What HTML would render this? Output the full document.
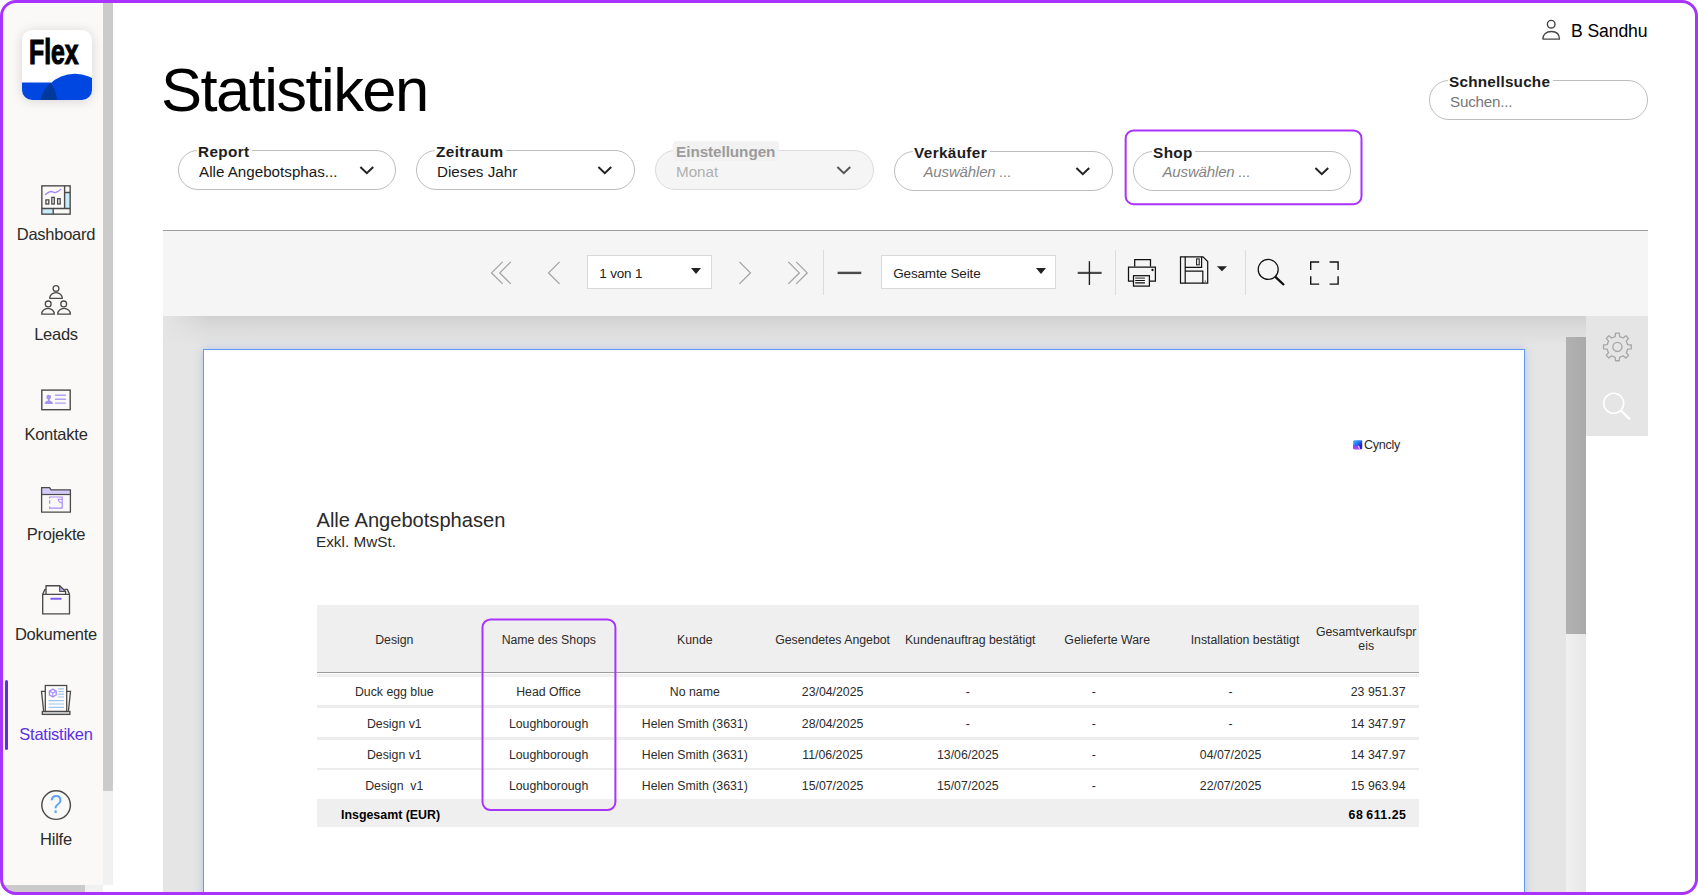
<!DOCTYPE html>
<html lang="de">
<head>
<meta charset="utf-8">
<title>Statistiken</title>
<style>
*{box-sizing:border-box;margin:0;padding:0}
html,body{width:1698px;height:895px;overflow:hidden;background:#fff}
body{font-family:"Liberation Sans",sans-serif;color:#111;position:relative}
.abs{position:absolute}
#frame{position:absolute;left:0;top:0;width:1698px;height:895px;border:3px solid #a932fd;border-radius:16px;box-shadow:0 0 0 24px #fff;z-index:50;pointer-events:none}
/* sidebar */
#side{position:absolute;left:0;top:0;width:103px;height:885px;background:#faf9f7}
#vsb{position:absolute;left:103px;top:0;width:10px;height:885px;background:#f1f1f1}
#vsb i{position:absolute;left:0;top:0;width:10px;height:791px;background:#cbcbcb}
#hsb{position:absolute;left:0;top:885px;width:103px;height:10px;background:#f1f1f1}
#hsb i{position:absolute;left:0;top:0;width:85px;height:10px;background:#cbcbcb}
.nav{position:absolute;left:0;width:112px;text-align:center;font-size:16.5px;line-height:20px;color:#2b2b2b;letter-spacing:-0.25px;white-space:nowrap}
.nav.on{color:#5a30e4}
.ico{position:absolute}
/* header */
#title{position:absolute;left:161px;top:54.5px;font-size:61.5px;line-height:70px;letter-spacing:-1.55px;color:#000;white-space:nowrap}
#user{position:absolute;left:1571px;top:20.4px;font-size:17.6px;line-height:22px;letter-spacing:-0.1px;color:#000;white-space:nowrap}
.pill{position:absolute;height:40px;border:1px solid #bdbdbd;border-radius:20px;background:#fff}
.pill.dis{background:#f5f5f5;border-color:#dcdcdc}
.pill .lab{position:absolute;left:17.6px;top:-8.3px;padding:0 2.7px 0 1.5px;background:#fff;font-weight:bold;font-size:15.3px;line-height:18px;letter-spacing:0.35px;color:#1d1d1d;white-space:nowrap}
.pill.dis .lab{background:#f2f2f2;color:#9b9b9b;border-radius:4px;left:16.6px;top:-10.3px;padding:2px 3.6px .4px 3.5px}
.pill .val{position:absolute;left:20px;top:11px;font-size:15.2px;line-height:20px;letter-spacing:0px;color:#1a1a1a;white-space:nowrap}
.pill.dis .val{color:#b0b0b0}
.pill .ph{position:absolute;left:28.5px;top:10px;font-size:15px;line-height:20px;letter-spacing:-0.15px;color:#858585;font-style:italic;white-space:nowrap}
.pill svg{position:absolute;left:180px;top:14.6px}
#hl1{position:absolute;left:1124px;top:129px;width:239px;height:77px;border:2px solid #a93af7;border-radius:9px}
/* viewer */
#rule{position:absolute;left:163px;top:230px;width:1485px;height:1px;background:#9c9c9c}
#tb{position:absolute;left:163px;top:231px;width:1485px;height:85px;background:#f5f5f5;z-index:3}
#vw{position:absolute;left:163px;top:316px;width:1423px;height:579px;background:#e5e5e5;overflow:hidden}
#vw:before{content:"";position:absolute;left:0;top:0;right:0;height:30px;background:linear-gradient(#d1d1d1,#dadada 35%,#e5e5e5);-webkit-mask-image:linear-gradient(90deg,transparent 0,#000 45px);mask-image:linear-gradient(90deg,transparent 0,#000 45px)}
#rp{position:absolute;left:1586px;top:316px;width:62px;height:120px;background:#e5e5e5}
#sb2{position:absolute;left:1566px;top:337px;width:20px;height:558px;background:linear-gradient(90deg,#f0f0f0,#e7e7e7)}
#sb2 i{position:absolute;left:0;top:0;width:20px;height:296.6px;background:linear-gradient(90deg,#b1b1b1,#aaa)}
#page{position:absolute;left:203px;top:349px;width:1322px;height:560px;background:#fff;border:1px solid #5c9cf2;box-shadow:0 0 9px rgba(110,145,225,.38)}
.tsel{position:absolute;height:34px;background:#fff;border:1px solid #d9d9d9;font-size:13.5px;line-height:35.5px;color:#222;padding-left:11.2px;letter-spacing:-0.15px}
.tsel:after{content:"";position:absolute;right:10px;top:12px;border:5px solid transparent;border-top:6px solid #222;border-bottom:0}
.tsel.t2:after{right:9px}
.vsep{position:absolute;width:1px;height:45px;top:19px;background:#dcdcdc}
/* report */
#rt{position:absolute;left:316.5px;top:508.5px;font-size:20.1px;line-height:22px;color:#2a2a2a;white-space:nowrap}
#rs{position:absolute;left:316px;top:533px;font-size:15.3px;line-height:18px;color:#2a2a2a;white-space:nowrap}
#thead{position:absolute;left:317px;top:605px;width:1102px;height:68px;background:#efefef;border-bottom:1px solid #9a9a9a}
.c{position:absolute;font-size:12.3px;line-height:14px;color:#2c2c2c;text-align:center;white-space:nowrap;transform:translateX(-50%)}
.r{position:absolute;font-size:12.3px;line-height:14px;color:#2c2c2c;text-align:right;white-space:nowrap}
.rowl{position:absolute;left:317px;width:1102px;height:3px;background:#ececec}
#tot{position:absolute;left:317px;top:799px;width:1102px;height:28px;background:#efefef}
#hl2{position:absolute;left:481.5px;top:618.5px;width:135px;height:192.5px;border:2px solid #a93af7;border-radius:9px}
</style>
</head>
<body>
<div id="side"></div>
<div id="vsb"><i></i></div>
<div id="hsb"><i></i></div>

<!-- logo -->
<div class="abs" style="left:21.5px;top:30px;width:70px;height:70px;border-radius:10px;background:#fff;box-shadow:0 1px 12px rgba(0,0,0,.15)"></div>
<svg class="abs" style="left:21.5px;top:30px" width="70" height="70" viewBox="21.5 30 70 70">
 <defs><clipPath id="lc"><rect x="21.5" y="30" width="70" height="70" rx="10"/></clipPath></defs>
 <g clip-path="url(#lc)">
  <path d="M21.5 82.6H50A35 35 0 0 1 56.5 100H21.5Z" fill="#0047e1"/>
  <circle cx="74.4" cy="110" r="36.2" fill="#0047e1"/>
  <path d="M39.8 100A36.2 36.2 0 0 1 50 82.6A35 35 0 0 1 56.5 100Z" fill="#003a9c"/>
 </g>
 <text transform="translate(28.5 64.4) scale(.70 1)" font-family="Liberation Sans, sans-serif" font-weight="bold" font-size="35.4" fill="#000" stroke="#000" stroke-width="1" vector-effect="non-scaling-stroke" stroke-linejoin="miter">Flex</text>
</svg>
<div class="abs" style="left:5px;top:680px;width:3px;height:70px;background:#5a2fe2;border-radius:1.5px"></div>

<!-- Dashboard -->
<svg class="ico" style="left:40px;top:184px" width="32" height="32" viewBox="40 184 32 32" fill="none" stroke="#4a4a4a" stroke-width="1.38">
 <rect x="64.6" y="192.5" width="5.6" height="16" fill="#c9ecfb" stroke="none"/>
 <rect x="41.8" y="208.5" width="11.4" height="5.7" fill="#c9ecfb" stroke="none"/>
 <rect x="41.85" y="185.85" width="28.3" height="28.3"/>
 <path d="M64.6 185.8V208.5M41.8 208.5H70.2M53.2 208.5V214.2M64.6 192.5H70.2"/>
 <g stroke-width="1.3"><rect x="45.9" y="199.9" width="2.9" height="4.1"/><rect x="51.8" y="197.4" width="2.5" height="6.6"/><rect x="57.6" y="198.7" width="2.6" height="5.3"/></g>
 <path d="M45.4 194.6C47.6 192.8 49.6 191.4 51.4 191.5S53.8 192.9 55.4 192.5S59.4 190.8 60.7 189.4" stroke="#a78bfa" stroke-width="1.3" stroke-linecap="round"/>
</svg>
<div class="nav" style="top:224px">Dashboard</div>

<!-- Leads -->
<svg class="ico" style="left:40px;top:284px" width="32" height="32" viewBox="40 284 32 32" fill="none" stroke="#4a4a4a" stroke-width="1.3" stroke-linejoin="round">
 <circle cx="56" cy="288.5" r="2.9"/><path d="M49.7 298.4a6.3 5.8 0 0 1 12.600 0Z"/>
 <circle cx="48.2" cy="303.9" r="2.9"/><path d="M41.700 314.2a6.3 5.8 0 0 1 12.600 0Z"/>
 <circle cx="63.700" cy="303.9" r="2.9"/><path d="M57.7 314.2a6.3 5.8 0 0 1 12.700 0Z"/>
</svg>
<div class="nav" style="top:324px">Leads</div>

<!-- Kontakte -->
<svg class="ico" style="left:40px;top:388px" width="32" height="24" viewBox="40 388 32 24" fill="none" stroke="#4a4a4a" stroke-width="1.4">
 <rect x="41.8" y="390.1" width="28.4" height="19.6"/>
 <circle cx="48.7" cy="397.1" r="2.4" fill="#a594f4" stroke="none"/>
 <path d="M47.7 398.5h2v2.2c1.9.2 3.2 1.1 3.2 3.2H44.8c0-2.100 1.200-3 3.100-3.200Z" fill="#a594f4" stroke="none"/>
 <path d="M55 395.2H65.9M55 399.2H65.9M55 403.1H65.9" stroke="#b0a0f6" stroke-width="1.4"/>
</svg>
<div class="nav" style="top:424px">Kontakte</div>

<!-- Projekte -->
<svg class="ico" style="left:40px;top:485px" width="32" height="30" viewBox="40 485 32 30" fill="none" stroke="#4a4a4a" stroke-width="1.2">
 <path d="M41.5 494.5V487.5H49.8L51.2 489.8H70.5V494.5Z" fill="#d6ccfa" stroke="none"/>
 <path d="M41.6 512.2V487.6H49.6L51 489.9H70.4V512.2Z" stroke-width="1.3"/>
 <path d="M41.5 494.5H70.5"/>
 <path d="M49.6 498.5V497H62.2V508.2H49.6V506.4M49.6 500.2V503.7" stroke="#a78bfa" stroke-width="1.2"/>
 <path d="M62.2 499.3H58.3C58.5 501.4 60 502.8 62.2 503.3" stroke="#a78bfa" stroke-width="1.1"/>
</svg>
<div class="nav" style="top:524px">Projekte</div>

<!-- Dokumente -->
<svg class="ico" style="left:40px;top:584px" width="32" height="32" viewBox="40 584 32 32" fill="none" stroke="#4a4a4a" stroke-width="1.35" stroke-linejoin="round">
 <path d="M59.8 586.4V591.4H65Z" fill="#b9a8f5" stroke="none"/>
 <path d="M46 594.3V585.7H59.7L65.6 591.5V594.3"/>
 <path d="M59.7 585.7V591.5H65.6" stroke-width="1.1"/>
 <path d="M42.7 594.3L45 589.3H46M69.5 594.3L67.3 589.4H64.4"/>
 <rect x="42.7" y="594.4" width="26.8" height="19.5"/>
 <path d="M51.2 598.7H60.8" stroke="#7e5ff2" stroke-width="2" stroke-linecap="round"/>
</svg>
<div class="nav" style="top:624px">Dokumente</div>

<!-- Statistiken -->
<svg class="ico" style="left:40px;top:684px" width="32" height="32" viewBox="40 684 32 32" fill="none" stroke="#4a4a4a" stroke-width="1.3">
 <path d="M45.2 691.3H41.5L43.7 711.4" fill="none"/>
 <path d="M66.8 691.3H70.5L68.4 711.4" fill="none"/>
 <rect x="45.3" y="685.5" width="21.4" height="26" fill="#fdfcfb"/>
 <rect x="42.3" y="711.5" width="27.6" height="2.9" fill="#dcdcdc"/>
 <path d="M58.1 688.8H63.9M58.1 691.5H63.9M58.1 694.1H63.9M58.1 697H63.9M48.6 700.6H63.9M48.6 704H63.9M48.6 707.4H63.9" stroke="#9cc6f2" stroke-width="1.2"/>
 <path d="M52.8 689.2l3.4 1.9v3.9l-3.4 1.9l-3.4-1.9v-3.9Z" stroke="#a78bfa" stroke-width="1.4" stroke-linejoin="round"/>
 <path d="M49.6 691.2l3.2 1.8l3.2-1.8M52.8 693v3.6" stroke="#a78bfa" stroke-width="1.1"/>
</svg>
<div class="nav on" style="top:724px">Statistiken</div>

<!-- Hilfe -->
<svg class="ico" style="left:40px;top:789px" width="32" height="32" viewBox="40 789 32 32" fill="none" stroke="#4a4a4a" stroke-width="1.2">
 <circle cx="56.1" cy="805.1" r="14.3" stroke-width="1.45"/>
</svg>
<div class="abs" style="left:40px;top:789.3px;width:32px;text-align:center;font-size:26px;line-height:30px;color:#5ba4f5;transform:scaleX(.86)">?</div>
<div class="nav" style="top:829px">Hilfe</div>

<div id="title">Statistiken</div>
<div id="user">B Sandhu</div>


<svg class="abs" style="left:1540px;top:18px" width="22" height="24" viewBox="1540 18 22 24" fill="none" stroke="#444" stroke-width="1.3">
 <circle cx="1551.2" cy="24.2" r="3.8" stroke-width="1.4"/><path d="M1542.9 39.1c0-5 3.4-7.6 8.3-7.6s8.3 2.6 8.3 7.6Z" stroke-linejoin="round"/>
</svg>
<div class="pill" style="left:1429px;top:80px;width:219px"><span class="lab" style="letter-spacing:0.2px">Schnellsuche</span><span class="val" style="color:#777;left:20px;letter-spacing:-0.2px">Suchen...</span></div>
<div class="pill " style="left:178px;top:150px;width:218px"><span class="lab">Report</span><span class="val">Alle Angebotsphas...</span><svg width="16" height="10" viewBox="0 0 16 10" fill="none" stroke="#222" stroke-width="2"><path d="M1.4 1L7.8 7.2L14.2 1"/></svg></div>
<div class="pill " style="left:416px;top:150px;width:219px"><span class="lab">Zeitraum</span><span class="val">Dieses Jahr</span><svg width="16" height="10" viewBox="0 0 16 10" fill="none" stroke="#222" stroke-width="2"><path d="M1.4 1L7.8 7.2L14.2 1"/></svg></div>
<div class="pill dis" style="left:655px;top:150px;width:219px"><span class="lab" style="letter-spacing:-0.08px">Einstellungen</span><span class="val">Monat</span><svg width="16" height="10" viewBox="0 0 16 10" fill="none" stroke="#555" stroke-width="2"><path d="M1.4 1L7.8 7.2L14.2 1"/></svg></div>
<div class="pill " style="left:894px;top:151px;width:219px"><span class="lab">Verkäufer</span><span class="ph">Auswählen ...</span><svg width="16" height="10" viewBox="0 0 16 10" fill="none" stroke="#222" stroke-width="2"><path d="M1.4 1L7.8 7.2L14.2 1"/></svg></div>
<div class="pill " style="left:1133px;top:151px;width:218px"><span class="lab">Shop</span><span class="ph">Auswählen ...</span><svg width="16" height="10" viewBox="0 0 16 10" fill="none" stroke="#222" stroke-width="2"><path d="M1.4 1L7.8 7.2L14.2 1"/></svg></div>
<svg class="abs" style="left:1120px;top:125px" width="250" height="86" viewBox="1120 125 250 86" fill="none"><rect x="1125.65" y="130.45" width="235.85" height="73.75" rx="8" stroke="#a932fd" stroke-width="2"/></svg>
<div id="rule"></div>
<div id="tb">
<svg class="abs" style="left:0;top:0" width="1485" height="85" viewBox="163 231 1485 85" fill="none">
 <g stroke="#a3a3a3" stroke-width="1.3">
  <path d="M502.6 261.9L491.6 272.9L502.6 283.9M510.8 261.9L499.8 272.9L510.8 283.9"/>
  <path d="M559.6 261.9L548.6 272.9L559.6 283.9"/>
  <path d="M739.4 261.9L750.4 272.9L739.4 283.9"/>
  <path d="M788.3 261.9L799.3 272.9L788.3 283.9M796.2 261.9L807.2 272.9L796.2 283.9"/>
 </g>
 <path d="M837.6 272.9H861.3" stroke="#4a4a4a" stroke-width="2.4"/>
 <path d="M1077.7 272.9H1101.6" stroke="#4a4a4a" stroke-width="2.2"/>
 <path d="M1089.4 261.2V285" stroke="#222" stroke-width="1.4"/>
 <!-- printer -->
 <g stroke="#111" stroke-width="1.25">
  <path d="M1134.7 266.6V259.6H1150.5V266.6"/>
  <path d="M1133.5 281H1128.5V267H1155.4V281H1149.4"/>
  <rect x="1133.5" y="275.700" width="15.9" height="10.4" fill="#f5f5f5"/>
  <path d="M1135.2 280.500H1144.9M1135.2 282.9H1144.9" stroke-width="1.1"/>
  <path d="M1135.2 278.100H1144.9" stroke="#555" stroke-width="1.3"/>
 </g>
 <circle cx="1152.5" cy="270" r="1.15" fill="#111"/>
 <!-- floppy -->
 <g stroke="#111" stroke-width="1.2">
  <path d="M1180.5 256.800H1203L1207.7 261.5V283.200H1180.5Z"/>
  <path d="M1185.2 256.800V283.200M1185.2 267.300H1201.6V256.800M1185.2 271.200H1202.800V283.200"/>
  <rect x="1196.6" y="258.900" width="2.6" height="6" stroke-width="1"/>
 </g>
 <circle cx="1205.3" cy="281.100" r=".6" fill="#111"/>
 <path d="M1216.9 266.2H1227L1221.95 271.2Z" fill="#222"/>
 <!-- search -->
 <circle cx="1268.2" cy="269.4" r="10" stroke="#111" stroke-width="1.25"/>
 <path d="M1275.4 276.8L1284 285" stroke="#111" stroke-width="2.4"/>
 <!-- fullscreen -->
 <path d="M1319.2 262H1310.7V270M1329.6 262H1338.1V270M1319.2 284.1H1310.7V276.2M1329.6 284.1H1338.1V276.2" stroke="#111" stroke-width="1.4"/>
</svg>
<div class="tsel" style="left:424px;top:24px;width:125px">1 von 1</div>
<div class="tsel t2" style="left:718px;top:24px;width:175px">Gesamte Seite</div>
<div class="vsep" style="left:660px"></div>
<div class="vsep" style="left:952px"></div>
<div class="vsep" style="left:1082px"></div>
</div>
<div id="vw"></div>
<div id="sb2"><i></i></div>
<div id="rp">
<svg class="abs" style="left:0;top:0" width="62" height="120" viewBox="1586 316 62 120" fill="none">
 <g transform="translate(1617.4 346.9)" stroke="#a6a6a6" stroke-width="1.3">
  <circle r="4.6"/>
  <path d="M-2.21 -10.37L-1.88 -13.87L1.88 -13.87L2.21 -10.37L5.77 -8.89L8.48 -11.14L11.14 -8.48L8.89 -5.77L10.37 -2.21L13.87 -1.88L13.87 1.88L10.37 2.21L8.89 5.77L11.14 8.48L8.48 11.14L5.77 8.89L2.21 10.37L1.88 13.87L-1.88 13.87L-2.21 10.37L-5.77 8.89L-8.48 11.14L-11.14 8.48L-8.89 5.77L-10.37 2.21L-13.87 1.88L-13.87 -1.88L-10.37 -2.21L-8.89 -5.77L-11.14 -8.48L-8.48 -11.14L-5.77 -8.89Z" stroke-linejoin="round"/>
 </g>
 <circle cx="1613.7" cy="403.3" r="10" stroke="#fff" stroke-width="1.6"/>
 <path d="M1621 410.6L1630 419.4" stroke="#fff" stroke-width="2.2"/>
</svg></div>
<div id="page"></div>
<!-- report -->
<svg class="abs" style="left:1352px;top:439px;filter:blur(.35px)" width="11" height="11" viewBox="1352 439 11 11">
 <defs><linearGradient id="cg" x1="0" y1="0" x2="1" y2="1"><stop offset="0" stop-color="#3dbdff"/><stop offset=".45" stop-color="#2a6cf2"/><stop offset=".75" stop-color="#1b19cf"/><stop offset="1" stop-color="#4a22e0"/></linearGradient>
 <linearGradient id="cg2" x1="0" y1="0" x2="0" y2="1"><stop offset="0" stop-color="#7a3cff"/><stop offset="1" stop-color="#c044ff"/></linearGradient></defs>
 <rect x="1353.2" y="440.2" width="9" height="9" rx="1.2" fill="url(#cg)"/>
 <path d="M1353.2 445.2L1358.3 446.2L1359.6 449.2H1354.4Q1353.2 449.2 1353.2 448Z" fill="url(#cg2)"/>
 <path d="M1357.6 445.6L1359.2 446L1360.1 449.2H1359.3Z" fill="#e9e4ff"/>
</svg>
<div class="abs" style="left:1364px;top:437px;font-size:12.6px;line-height:16px;letter-spacing:-0.3px;color:#2a2a2a;white-space:nowrap">Cyncly</div>
<div id="rt">Alle Angebotsphasen</div>
<div id="rs">Exkl. MwSt.</div>
<div id="thead"></div>
<div class="abs" style="left:317px;top:674px;width:1102px;height:3px;background:#f0f0f0"></div>
<div class="rowl" style="top:705px"></div>
<div class="rowl" style="top:737px;height:2.5px"></div>
<div class="rowl" style="top:768px;height:2px"></div>
<div id="tot"></div>
<div class="c" style="left:394.3px;top:633px">Design</div>
<div class="c" style="left:548.8px;top:633px">Name des Shops</div>
<div class="c" style="left:694.8px;top:633px">Kunde</div>
<div class="c" style="left:832.6px;top:633px">Gesendetes Angebot</div>
<div class="c" style="left:970.2px;top:633px">Kundenauftrag bestätigt</div>
<div class="c" style="left:1107.2px;top:633px">Gelieferte Ware</div>
<div class="c" style="left:1245px;top:633px">Installation bestätigt</div>
<div class="c" style="left:1366.2px;top:625px">Gesamtverkaufspr<br>eis</div>
<div class="c" style="left:394.3px;top:685px">Duck egg blue</div><div class="c" style="left:548.6px;top:685px">Head Office</div><div class="c" style="left:694.8px;top:685px">No name</div><div class="c" style="left:832.6px;top:685px">23/04/2025</div><div class="c" style="left:967.8px;top:685px">-</div><div class="c" style="left:1093.8px;top:685px">-</div><div class="c" style="left:1230.6px;top:685px">-</div><div class="r" style="left:1300px;width:105.5px;top:685px">23 951.37</div>
<div class="c" style="left:394.3px;top:717px">Design v1</div><div class="c" style="left:548.6px;top:717px">Loughborough</div><div class="c" style="left:694.8px;top:717px">Helen Smith (3631)</div><div class="c" style="left:832.6px;top:717px">28/04/2025</div><div class="c" style="left:967.8px;top:717px">-</div><div class="c" style="left:1093.8px;top:717px">-</div><div class="c" style="left:1230.6px;top:717px">-</div><div class="r" style="left:1300px;width:105.5px;top:717px">14 347.97</div>
<div class="c" style="left:394.3px;top:748px">Design v1</div><div class="c" style="left:548.6px;top:748px">Loughborough</div><div class="c" style="left:694.8px;top:748px">Helen Smith (3631)</div><div class="c" style="left:832.6px;top:748px">11/06/2025</div><div class="c" style="left:967.8px;top:748px">13/06/2025</div><div class="c" style="left:1093.8px;top:748px">-</div><div class="c" style="left:1230.6px;top:748px">04/07/2025</div><div class="r" style="left:1300px;width:105.5px;top:748px">14 347.97</div>
<div class="c" style="left:394.3px;top:779px">Design &nbsp;v1</div><div class="c" style="left:548.6px;top:779px">Loughborough</div><div class="c" style="left:694.8px;top:779px">Helen Smith (3631)</div><div class="c" style="left:832.6px;top:779px">15/07/2025</div><div class="c" style="left:967.8px;top:779px">15/07/2025</div><div class="c" style="left:1093.8px;top:779px">-</div><div class="c" style="left:1230.6px;top:779px">22/07/2025</div><div class="r" style="left:1300px;width:105.5px;top:779px">15 963.94</div>
<div class="abs" style="left:341px;top:808px;font-size:12.4px;line-height:14px;font-weight:bold;color:#000;white-space:nowrap;letter-spacing:0">Insgesamt (EUR)</div>
<div class="r" style="left:1300px;width:106.5px;top:808px;font-weight:bold;color:#000;letter-spacing:0.55px;word-spacing:-1px">68 611.25</div>
<svg class="abs" style="left:476px;top:614px" width="146" height="202" viewBox="476 614 146 202" fill="none"><rect x="482.5" y="619.4" width="132.9" height="190.7" rx="8" stroke="#a932fd" stroke-width="2"/></svg>

<div id="frame"></div>
</body>
</html>
